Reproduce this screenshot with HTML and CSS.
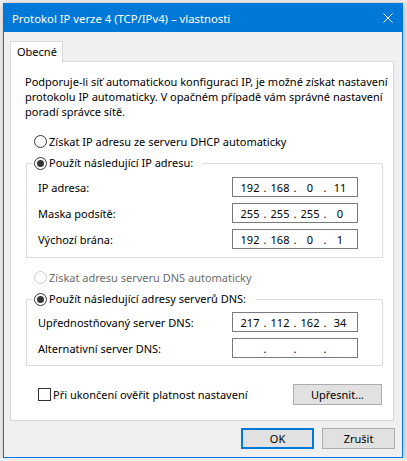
FILE: index.html
```html
<!DOCTYPE html>
<html lang="cs">
<head>
<meta charset="utf-8">
<title>Protokol IP verze 4 (TCP/IPv4) – vlastnosti</title>
<link rel="stylesheet" href="styles.css">
</head>
<body>
<div class="window">
  <div class="titlebar">
    <span class="title">Protokol IP verze 4 (TCP/IPv4) – vlastnosti</span>
    <svg class="close" viewBox="0 0 10 10" aria-hidden="true">
      <path d="M0.5 0.5L9.5 9.5M9.5 0.5L0.5 9.5" stroke="#fff" stroke-width="1" fill="none"/>
    </svg>
  </div>
  <div class="client">
    <div class="tabs"><div class="tab">Obecné</div></div>
    <div class="panel">
      <p class="intro">Podporuje-li síť automatickou konfiguraci IP, je možné získat nastavení<br>protokolu IP automaticky. V opačném případě vám správné nastavení<br>poradí správce sítě.</p>

      <div class="radio option"><span class="rb"></span>Získat IP adresu ze serveru DHCP automaticky</div>

      <fieldset class="group">
        <legend><span class="radio"><span class="rb on"></span>Použít následující IP adresu:</span></legend>
        <div class="row"><span>IP adresa:</span>
          <div class="ip"><span class="seg">192</span><span class="dot">.</span><span class="seg">168</span><span class="dot">.</span><span class="seg">0</span><span class="dot">.</span><span class="seg">11</span></div>
        </div>
        <div class="row"><span>Maska podsítě:</span>
          <div class="ip"><span class="seg">255</span><span class="dot">.</span><span class="seg">255</span><span class="dot">.</span><span class="seg">255</span><span class="dot">.</span><span class="seg">0</span></div>
        </div>
        <div class="row"><span>Výchozí brána:</span>
          <div class="ip"><span class="seg">192</span><span class="dot">.</span><span class="seg">168</span><span class="dot">.</span><span class="seg">0</span><span class="dot">.</span><span class="seg">1</span></div>
        </div>
      </fieldset>

      <div class="radio option auto-dns disabled"><span class="rb"></span>Získat adresu serveru DNS automaticky</div>

      <fieldset class="group dns">
        <legend><span class="radio"><span class="rb on"></span>Použít následující adresy serverů DNS:</span></legend>
        <div class="row"><span>Upřednostňovaný server DNS:</span>
          <div class="ip"><span class="seg">217</span><span class="dot">.</span><span class="seg">112</span><span class="dot">.</span><span class="seg">162</span><span class="dot">.</span><span class="seg">34</span></div>
        </div>
        <div class="row"><span>Alternativní server DNS:</span>
          <div class="ip"><span class="seg"></span><span class="dot">.</span><span class="seg"></span><span class="dot">.</span><span class="seg"></span><span class="dot">.</span><span class="seg"></span></div>
        </div>
      </fieldset>

      <div class="footer-row">
        <span class="check"><span class="cb"></span>Při ukončení ověřit platnost nastavení</span>
        <button class="btn more" type="button">Upřesnit...</button>
      </div>
    </div>
    <div class="actions">
      <button class="btn default" type="button">OK</button>
      <button class="btn" type="button">Zrušit</button>
    </div>
  </div>
</div>
</body>
</html>
```
FILE: styles.css
```css
* {
  box-sizing: border-box;
}

body {
  margin: 0;
  background: #eeeeee;
  font-family: "Noto Sans", "DejaVu Sans", sans-serif;
  font-size: 11px;
  color: #000;
}

/* dialog frame */
.window {
  margin: 3px 0 0 3px;
  width: 400px;
  border: 1px solid #0078d7;
  background: #f0f0f0;
  box-shadow: 1px 1px 6px rgba(0, 0, 0, 0.28);
  display: flex;
  flex-direction: column;
}

.titlebar {
  height: 28px;
  background: #0078d7;
  color: #fff;
  display: flex;
  align-items: center;
  padding: 0 9px 0 8px;
  font-size: 11.3px;
}

.title {
  flex: 1;
  white-space: nowrap;
}

.close {
  width: 10px;
  height: 10px;
}

.client {
  padding: 9px 8px 8px 6px;
}

/* tab strip */
.tabs {
  display: flex;
}

.tab {
  position: relative;
  z-index: 1;
  width: 53px;
  height: 21px;
  margin-bottom: -1px;
  border: 1px solid #d9d9d9;
  border-bottom: 0;
  background: #fff;
  padding-left: 6px;
  line-height: 19px;
}

.panel {
  border: 1px solid #d9d9d9;
  background: #fff;
  padding: 12px 10px 15px 14px;
}

.intro {
  margin: 0;
  line-height: 15px;
  white-space: nowrap;
}

/* radio buttons */
.radio {
  display: flex;
  align-items: center;
  height: 16px;
  white-space: nowrap;
}

.option {
  margin: 14px 0 0 9px;
}

.option.auto-dns {
  margin-top: 11px;
}

.rb {
  flex: none;
  width: 13px;
  height: 13px;
  margin-right: 2px;
  border: 1px solid #333;
  border-radius: 50%;
  background: #fff;
  display: grid;
  place-items: center;
}

.rb.on::after {
  content: "";
  width: 7px;
  height: 7px;
  border-radius: 50%;
  background: #333;
}

.disabled {
  color: #6d6d6d;
}

.disabled .rb {
  border-color: #cccccc;
}

/* group boxes */
.group {
  margin: 6px 0 0 1px;
  min-width: 0;
  border: 1px solid #dcdcdc;
  padding: 6px 24px 8px 6px;
  display: flex;
  flex-direction: column;
  gap: 6px;
}

.group.dns {
  padding-top: 5px;
  padding-bottom: 7px;
}

.group legend {
  padding: 0 9px 0 1px;
  line-height: 16px;
}

.row {
  display: flex;
  align-items: center;
  justify-content: space-between;
  height: 20px;
  padding-left: 5px;
  white-space: nowrap;
}

/* IP address field */
.ip {
  width: 126px;
  height: 20px;
  border: 1px solid #7a7a7a;
  background: #fff;
  display: flex;
  align-items: center;
  padding: 0 6px;
}

.ip .seg {
  width: 22px;
  text-align: center;
}

.ip .dot {
  width: 8px;
  text-align: center;
}

.footer-row {
  margin-top: 18px;
  height: 21px;
  padding-left: 13px;
  display: flex;
  align-items: center;
  justify-content: space-between;
}

.check {
  display: flex;
  align-items: center;
  white-space: nowrap;
}

.cb {
  width: 13px;
  height: 13px;
  margin-right: 2px;
  border: 1px solid #333;
  background: #fff;
}

/* push buttons */
.btn {
  font: inherit;
  color: #000;
  height: 21px;
  padding: 0;
  background: #e1e1e1;
  border: 1px solid #adadad;
}

.btn.more {
  width: 89px;
  margin-right: 1px;
}

.actions {
  display: flex;
  justify-content: flex-end;
  gap: 8px;
  margin: 7px -1px 0 0;
}

.actions .btn {
  width: 73px;
}

.btn.default {
  border: 2px solid #0078d7;
}
```
